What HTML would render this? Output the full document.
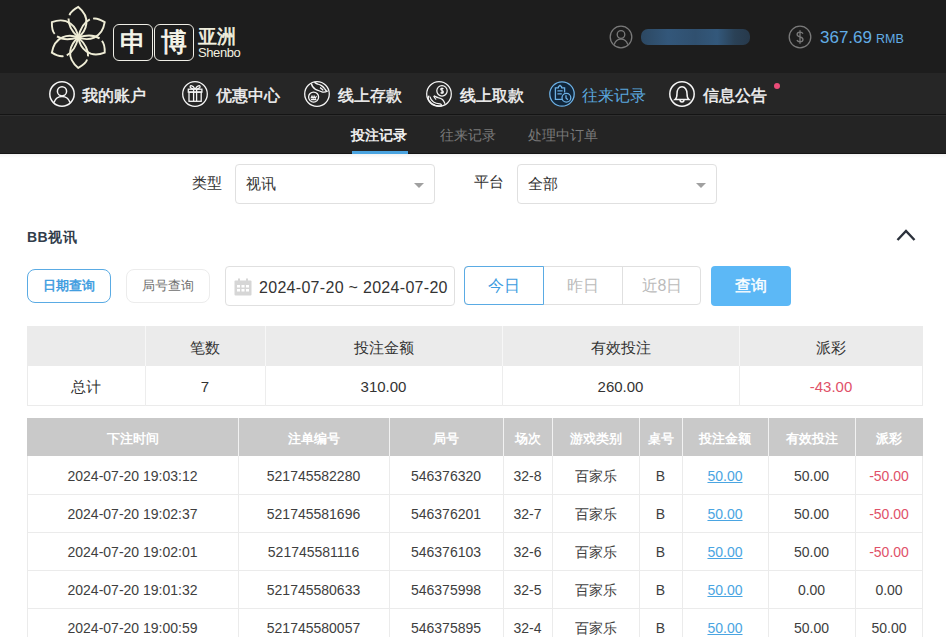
<!DOCTYPE html>
<html><head><meta charset="utf-8">
<style>
*{margin:0;padding:0;box-sizing:border-box}
html,body{width:946px;height:637px;overflow:hidden;background:#fff;font-family:"Liberation Sans",sans-serif;color:#333}
.abs{position:absolute}
#top{position:absolute;left:0;top:0;width:946px;height:73px;background:#1d1d1d}
#nav{position:absolute;left:0;top:73px;width:946px;height:41px;background:#262626}
#navline{position:absolute;left:0;top:114px;width:946px;height:1px;background:#141414}
#navline2{position:absolute;left:0;top:115px;width:946px;height:1px;background:#2e2e2e}
#sub{position:absolute;left:0;top:116px;width:946px;height:38px;background:#242424}
.ni{position:absolute;top:80px;width:26px;height:26px}
.nt{position:absolute;top:85px;font-size:16px;line-height:22px;color:#f2f2f2;font-weight:400;-webkit-text-stroke:0.45px #f2f2f2;white-space:nowrap;letter-spacing:0}
.st{position:absolute;top:125px;font-size:14px;line-height:20px;color:#7a7a7a;white-space:nowrap}
.lbl{position:absolute;font-size:15px;line-height:20px;color:#333}
.sel{position:absolute;top:164px;width:200px;height:40px;border:1px solid #e0e0e0;border-radius:4px}
.sel span{position:absolute;left:10px;top:9px;font-size:15px;line-height:20px;color:#333}
.sel i{position:absolute;right:10px;top:18px;width:0;height:0;border-left:5px solid transparent;border-right:5px solid transparent;border-top:5px solid #a0a0a0}
table{border-collapse:collapse;position:absolute}
.cell{text-align:center;line-height:20px;color:#333;white-space:nowrap}
.hc{text-align:center;font-size:13px;line-height:20px;color:#fff;font-weight:bold;white-space:nowrap}
.dcell{text-align:center;font-size:14px;line-height:20px;color:#3e3e3e;white-space:nowrap}
</style></head><body>
<div id="top"></div>
<div id="nav"></div>
<div id="navline"></div>
<div id="navline2"></div>
<div id="sub"></div>
<div class="abs" style="left:0;top:153px;width:946px;height:1px;background:#161616"></div>
<div class="abs" style="left:0;top:154px;width:946px;height:4px;background:linear-gradient(#f3f3f3,#fff)"></div>


<!-- logo -->
<svg class="abs" style="left:44px;top:4px" width="68" height="66" viewBox="44 4 68 66">
<g transform="translate(78.3,37.4) rotate(-2) scale(1.07)" fill="none" stroke="#efedd6" stroke-width="1.8">
<g id="p">
<path d="M0,0 C8,-6 13,-18 1,-28.5 C-3,-26.5 -6.5,-24 -7.5,-21"/>
<path d="M0,0 C-5,-5 -9,-12 -8.5,-18"/>
</g>
<use href="#p" transform="rotate(60)"/>
<use href="#p" transform="rotate(120)"/>
<use href="#p" transform="rotate(180)"/>
<use href="#p" transform="rotate(240)"/>
<use href="#p" transform="rotate(300)"/>
</g>
</svg>
<div class="abs" style="left:113px;top:24px;width:40px;height:37px;border:1.7px solid #efeee6;border-radius:6px"></div>
<div class="abs" style="left:154px;top:24px;width:40px;height:37px;border:1.7px solid #efeee6;border-radius:6px"></div>
<div class="abs" style="left:113px;top:24px;width:40px;height:37px;text-align:center;font-size:26px;line-height:37px;color:#f6f5ea;-webkit-text-stroke:0.8px #f6f5ea">申</div>
<div class="abs" style="left:154px;top:24px;width:40px;height:37px;text-align:center;font-size:26px;line-height:37px;color:#f6f5ea;-webkit-text-stroke:0.8px #f6f5ea">博</div>
<div class="abs" style="left:198px;top:26px;font-size:19px;line-height:22px;color:#f4f2e0;-webkit-text-stroke:0.6px #f4f2e0">亚洲</div>
<div class="abs" style="left:198px;top:45px;font-size:13px;line-height:16px;color:#f4f2e0;letter-spacing:-0.4px">Shenbo</div>

<!-- account -->
<svg class="abs" style="left:609px;top:25px" width="24" height="24" viewBox="0 0 24 24" fill="none" stroke="#7a7a7a" stroke-width="1.3">
<circle cx="12" cy="12" r="10.8"/><circle cx="12" cy="9.5" r="3.8"/><path d="M5.2 19.6 C6.5 15.5 9 14.2 12 14.2 C15 14.2 17.5 15.5 18.8 19.6"/>
</svg>
<div class="abs" style="left:641px;top:29px;width:109px;height:16px;border-radius:7px;background:linear-gradient(90deg,#2c4862 0%,#33577a 25%,#30506f 50%,#33587b 70%,#2a4156 86%,#27394b 100%)"></div>
<svg class="abs" style="left:788px;top:25px" width="24" height="24" viewBox="0 0 24 24" fill="none" stroke="#7a7a7a" stroke-width="1.3">
<circle cx="12" cy="12" r="10.8"/><path d="M15 8.6 C14.3 7.5 13.2 7.1 12 7.1 C10.3 7.1 9.1 8 9.1 9.4 C9.1 12.4 15 11.3 15 14.4 C15 15.9 13.7 16.8 12 16.8 C10.6 16.8 9.5 16.2 8.9 15.1 M12 5.2 V18.8"/>
</svg>
<div class="abs" style="left:820px;top:28px;font-size:17px;line-height:20px;color:#62ade6;white-space:nowrap">367.69<span style="font-size:12.5px;margin-left:4px">RMB</span></div>

<!-- nav items -->
<svg class="abs" style="left:49px;top:81px" width="26" height="26" viewBox="0 0 26 26" fill="none" stroke="#f5f5f5" stroke-width="1.5">
<circle cx="13" cy="13" r="12.2"/><circle cx="13" cy="10.3" r="4.6"/><path d="M5 21.6 C6.5 17 9.5 15.6 13 15.6 C16.5 15.6 19.5 17 21 21.6"/>
</svg>
<svg class="abs" style="left:182px;top:81px" width="26" height="26" viewBox="0 0 26 26" fill="none" stroke="#f5f5f5" stroke-width="1.3">
<circle cx="13" cy="13" r="12.3"/>
<rect x="6.3" y="8.2" width="13.6" height="2.9"/><rect x="7" y="11.1" width="12.2" height="9.2"/>
<path d="M11.6 8.2 V20.3 M14.6 8.2 V20.3"/>
<path d="M13 8 C12 6.2 10.6 4.8 9.2 4.6 C8 4.5 7.8 5.8 8.6 6.8 C9.4 7.6 10.6 8 11.8 8.1 M13.2 8 C14.2 6.2 15.6 4.8 17 4.6 C18.2 4.5 18.4 5.8 17.6 6.8 C16.8 7.6 15.6 8 14.4 8.1"/>
</svg>
<svg class="abs" style="left:304px;top:81px" width="26" height="26" viewBox="0 0 26 26" fill="none" stroke="#f5f5f5" stroke-width="1.3">
<circle cx="13" cy="13" r="12.3"/>
<circle cx="9.6" cy="16.1" r="5"/>
<path d="M6.9 17.4 L8 15 L9.1 17.4 L10.1 15 L11.2 17.4 L12.5 15 M6.9 18.6 H12.4" stroke-width="1.1"/>
<path d="M7.4 2.4 C7.8 5.2 9 7 11.5 8.3 C13 9.1 14.5 9.6 15.7 10 C17 10.5 17.8 11 18.6 11.1 C20 11.3 21.5 11.2 23.8 10"/>
<path d="M10.4 1.2 C11.8 2.2 12.6 2.8 13.6 3 C15 3.4 16.4 3.9 17.4 4.6 C18.8 5.6 19.8 6.4 20.4 7.3 C21.2 8.4 22 9.5 22.7 10.4"/>
<path d="M16 6.6 C17.2 7.3 18.4 8.2 19.2 9.4"/>
</svg>
<svg class="abs" style="left:426px;top:81px" width="26" height="26" viewBox="0 0 26 26" fill="none" stroke="#f5f5f5" stroke-width="1.25">
<circle cx="13" cy="13" r="12.3"/>
<circle cx="16" cy="9.8" r="5.2"/>
<path d="M17.4 7.9 C17.1 7.4 16.6 7.2 16 7.2 C15.2 7.2 14.7 7.7 14.7 8.3 C14.7 9.8 17.4 9.4 17.4 11 C17.4 11.8 16.8 12.3 16 12.3 C15.3 12.3 14.8 12 14.6 11.5 M16 6.5 V13" stroke-width="1.1"/>
<path d="M3.3 14.8 C2 15.2 1.9 17.6 3 19.6 C4.2 21.8 6.6 23.4 9.5 24.4 C11.5 25 13.5 25 16 24.6"/>
<path d="M3.9 15.6 C4.4 17.6 5.6 19.8 7.5 21 C9 22 11 22.6 14 22.8 C14.8 23 15.3 23.5 15.6 24.2"/>
<path d="M7.8 14.9 C9.2 15.4 10.5 16.2 12 16.6 C13.8 17 15.3 17.4 16.5 18.5 C17.6 19.5 18.4 21 19 22.8"/>
<path d="M7.8 14.9 C8.2 16.2 9 17.8 10.2 18.6"/>
</svg>
<svg class="abs" style="left:549px;top:81px" width="26" height="26" viewBox="0 0 26 26" fill="none" stroke="#6cb0e4" stroke-width="1.3">
<circle cx="13" cy="13" r="12.2" fill="#11263a"/>
<path d="M14.6 18.4 H6.4 V6.8 H9.4 M12.6 6.8 H15.6 V11.6"/>
<path d="M9.4 7.2 V5.8 L11 4.4 L12.6 5.8 V7.2" />
<path d="M8.4 9.8 H13.6 M8.4 12.8 H12.8"/>
<circle cx="17.4" cy="16.8" r="4.4" fill="#11263a"/>
<path d="M17 14.2 V17 L18.8 18.8"/>
</svg>
<svg class="abs" style="left:669px;top:81px" width="26" height="26" viewBox="0 0 26 26" fill="none" stroke="#f5f5f5" stroke-width="1.5">
<circle cx="13" cy="13" r="12.2"/>
<path d="M6.2 18.4 H19.8 C18.2 17.2 18 15.8 18 12.6 C18 8.6 16 5.8 13 5.8 C10 5.8 8 8.6 8 12.6 C8 15.8 7.8 17.2 6.2 18.4 Z"/>
<path d="M11 18.5 C11 20.2 11.9 21 13 21 C14.1 21 15 20.2 15 18.5"/>
</svg>

<div class="nt" style="left:82px">我的账户</div>
<div class="nt" style="left:216px">优惠中心</div>
<div class="nt" style="left:338px">线上存款</div>
<div class="nt" style="left:460px">线上取款</div>
<div class="nt" style="left:582px;color:#5aa6de;-webkit-text-stroke:0">往来记录</div>
<div class="nt" style="left:703px">信息公告</div>
<div class="abs" style="left:774px;top:83px;width:6px;height:6px;border-radius:3px;background:#ea4c78"></div>

<!-- sub nav -->
<div class="st" style="left:351px;color:#fafafa;-webkit-text-stroke:0.45px #fafafa">投注记录</div>
<div class="abs" style="left:352px;top:151px;width:56px;height:3px;background:#4aa3df"></div>
<div class="st" style="left:440px">往来记录</div>
<div class="st" style="left:528px">处理中订单</div>

<!-- filters -->
<div class="lbl" style="left:192px;top:173px">类型</div>
<div class="sel" style="left:235px"><span>视讯</span><i></i></div>
<div class="lbl" style="left:474px;top:172px">平台</div>
<div class="sel" style="left:517px"><span>全部</span><i></i></div>


<!-- section title -->
<div class="abs" style="left:27px;top:227px;font-size:14px;line-height:20px;font-weight:bold;color:#323d4b;letter-spacing:0.5px">BB视讯</div>
<svg class="abs" style="left:894px;top:226px" width="24" height="18" viewBox="0 0 24 18"><path d="M3.5 14 L12 5 L20.5 14" fill="none" stroke="#2b313b" stroke-width="2.4"/></svg>

<!-- query type buttons -->
<div class="abs btn" style="left:27px;top:269px;width:84px;height:34px;border:1px solid #5aabe4;border-radius:8px;color:#3d9ce0;font-size:13px;line-height:32px;text-align:center;-webkit-text-stroke:0.5px #3d9ce0">日期查询</div>
<div class="abs btn" style="left:126px;top:269px;width:84px;height:34px;border:1px solid #ececec;border-radius:8px;color:#707070;font-size:13px;line-height:32px;text-align:center">局号查询</div>

<!-- date box -->
<div class="abs" style="left:225px;top:266px;width:230px;height:40px;border:1px solid #e0e0e0;border-radius:4px"></div>
<svg class="abs" style="left:234px;top:278px" width="18" height="18" viewBox="0 0 18 18">
<rect x="0.5" y="2.5" width="17" height="15" rx="1" fill="#d6d6d6"/>
<rect x="4" y="0.5" width="2" height="4" fill="#d6d6d6"/><rect x="12" y="0.5" width="2" height="4" fill="#d6d6d6"/>
<g fill="#fff"><rect x="3" y="7" width="3" height="2.5"/><rect x="7.5" y="7" width="3" height="2.5"/><rect x="12" y="7" width="3" height="2.5"/><rect x="3" y="11" width="3" height="2.5"/><rect x="7.5" y="11" width="3" height="2.5"/><rect x="12" y="11" width="3" height="2.5"/></g>
</svg>
<div class="abs" style="left:259px;top:278px;font-size:16px;line-height:20px;color:#333;white-space:nowrap;letter-spacing:0.3px">2024-07-20 ~ 2024-07-20</div>

<!-- day group -->
<div class="abs" style="left:464px;top:266px;width:237px;height:39px;border:1px solid #e0e0e0;border-radius:4px"></div>
<div class="abs" style="left:543px;top:267px;width:1px;height:37px;background:#e0e0e0"></div>
<div class="abs" style="left:622px;top:267px;width:1px;height:37px;background:#e0e0e0"></div>
<div class="abs" style="left:464px;top:266px;width:80px;height:39px;border:1px solid #5aabe4;border-radius:4px 0 0 4px"></div>
<div class="abs" style="left:464px;top:276px;width:80px;text-align:center;font-size:16px;line-height:20px;color:#3d9ce0">今日</div>
<div class="abs" style="left:543px;top:276px;width:80px;text-align:center;font-size:16px;line-height:20px;color:#bbb">昨日</div>
<div class="abs" style="left:622px;top:276px;width:80px;text-align:center;font-size:16px;line-height:20px;color:#bbb">近8日</div>
<div class="abs" style="left:711px;top:266px;width:80px;height:40px;background:#5cb8f6;border-radius:4px;color:#fff;font-size:16px;line-height:40px;text-align:center;-webkit-text-stroke:0.4px #fff">查询</div>
<!-- tables -->
<div class="abs" style="left:27px;top:326px;width:896px;height:40px;background:#ebebeb"></div>
<div class="abs" style="left:27px;top:366px;width:896px;height:40px;border:1px solid #ebebeb;border-top:none"></div>
<div class="abs" style="left:145px;top:326px;width:1px;height:40px;background:#f7f7f7"></div>
<div class="abs" style="left:145px;top:366px;width:1px;height:40px;background:#ededed"></div>
<div class="abs" style="left:265px;top:326px;width:1px;height:40px;background:#f7f7f7"></div>
<div class="abs" style="left:265px;top:366px;width:1px;height:40px;background:#ededed"></div>
<div class="abs" style="left:502px;top:326px;width:1px;height:40px;background:#f7f7f7"></div>
<div class="abs" style="left:502px;top:366px;width:1px;height:40px;background:#ededed"></div>
<div class="abs" style="left:739px;top:326px;width:1px;height:40px;background:#f7f7f7"></div>
<div class="abs" style="left:739px;top:366px;width:1px;height:40px;background:#ededed"></div>
<div class="abs cell" style="left:27px;top:338px;width:118px;font-size:15px"></div>
<div class="abs cell" style="left:27px;top:377px;width:118px;font-size:15px;">总计</div>
<div class="abs cell" style="left:145px;top:338px;width:120px;font-size:15px">笔数</div>
<div class="abs cell" style="left:145px;top:377px;width:120px;font-size:15px;">7</div>
<div class="abs cell" style="left:265px;top:338px;width:237px;font-size:15px">投注金额</div>
<div class="abs cell" style="left:265px;top:377px;width:237px;font-size:15px;">310.00</div>
<div class="abs cell" style="left:502px;top:338px;width:237px;font-size:15px">有效投注</div>
<div class="abs cell" style="left:502px;top:377px;width:237px;font-size:15px;">260.00</div>
<div class="abs cell" style="left:739px;top:338px;width:184px;font-size:15px">派彩</div>
<div class="abs cell" style="left:739px;top:377px;width:184px;font-size:15px;color:#df5169;">-43.00</div>
<div class="abs" style="left:27px;top:418px;width:896px;height:38px;background:#c9c9c9"></div>
<div class="abs" style="left:238px;top:418px;width:1px;height:38px;background:#f2f2f2"></div>
<div class="abs" style="left:389px;top:418px;width:1px;height:38px;background:#f2f2f2"></div>
<div class="abs" style="left:503px;top:418px;width:1px;height:38px;background:#f2f2f2"></div>
<div class="abs" style="left:552px;top:418px;width:1px;height:38px;background:#f2f2f2"></div>
<div class="abs" style="left:639px;top:418px;width:1px;height:38px;background:#f2f2f2"></div>
<div class="abs" style="left:682px;top:418px;width:1px;height:38px;background:#f2f2f2"></div>
<div class="abs" style="left:768px;top:418px;width:1px;height:38px;background:#f2f2f2"></div>
<div class="abs" style="left:855px;top:418px;width:1px;height:38px;background:#f2f2f2"></div>
<div class="abs hc" style="left:27px;top:429px;width:211px">下注时间</div>
<div class="abs hc" style="left:238px;top:429px;width:151px">注单编号</div>
<div class="abs hc" style="left:389px;top:429px;width:114px">局号</div>
<div class="abs hc" style="left:503px;top:429px;width:49px">场次</div>
<div class="abs hc" style="left:552px;top:429px;width:87px">游戏类别</div>
<div class="abs hc" style="left:639px;top:429px;width:43px">桌号</div>
<div class="abs hc" style="left:682px;top:429px;width:86px">投注金额</div>
<div class="abs hc" style="left:768px;top:429px;width:87px">有效投注</div>
<div class="abs hc" style="left:855px;top:429px;width:68px">派彩</div>
<div class="abs" style="left:27px;top:456px;width:896px;height:39px;border:1px solid #ebebeb;border-top:none"></div>
<div class="abs" style="left:238px;top:456px;width:1px;height:38px;background:#ebebeb"></div>
<div class="abs" style="left:389px;top:456px;width:1px;height:38px;background:#ebebeb"></div>
<div class="abs" style="left:503px;top:456px;width:1px;height:38px;background:#ebebeb"></div>
<div class="abs" style="left:552px;top:456px;width:1px;height:38px;background:#ebebeb"></div>
<div class="abs" style="left:639px;top:456px;width:1px;height:38px;background:#ebebeb"></div>
<div class="abs" style="left:682px;top:456px;width:1px;height:38px;background:#ebebeb"></div>
<div class="abs" style="left:768px;top:456px;width:1px;height:38px;background:#ebebeb"></div>
<div class="abs" style="left:855px;top:456px;width:1px;height:38px;background:#ebebeb"></div>
<div class="abs dcell" style="left:27px;top:466px;width:211px;">2024-07-20 19:03:12</div>
<div class="abs dcell" style="left:238px;top:466px;width:151px;">521745582280</div>
<div class="abs dcell" style="left:389px;top:466px;width:114px;">546376320</div>
<div class="abs dcell" style="left:503px;top:466px;width:49px;">32-8</div>
<div class="abs dcell" style="left:552px;top:466px;width:87px;">百家乐</div>
<div class="abs dcell" style="left:639px;top:466px;width:43px;">B</div>
<div class="abs dcell" style="left:682px;top:466px;width:86px;color:#4aa5e2;text-decoration:underline">50.00</div>
<div class="abs dcell" style="left:768px;top:466px;width:87px;">50.00</div>
<div class="abs dcell" style="left:855px;top:466px;width:68px;color:#df5169">-50.00</div>
<div class="abs" style="left:27px;top:494px;width:896px;height:39px;border:1px solid #ebebeb;border-top:none"></div>
<div class="abs" style="left:238px;top:494px;width:1px;height:38px;background:#ebebeb"></div>
<div class="abs" style="left:389px;top:494px;width:1px;height:38px;background:#ebebeb"></div>
<div class="abs" style="left:503px;top:494px;width:1px;height:38px;background:#ebebeb"></div>
<div class="abs" style="left:552px;top:494px;width:1px;height:38px;background:#ebebeb"></div>
<div class="abs" style="left:639px;top:494px;width:1px;height:38px;background:#ebebeb"></div>
<div class="abs" style="left:682px;top:494px;width:1px;height:38px;background:#ebebeb"></div>
<div class="abs" style="left:768px;top:494px;width:1px;height:38px;background:#ebebeb"></div>
<div class="abs" style="left:855px;top:494px;width:1px;height:38px;background:#ebebeb"></div>
<div class="abs dcell" style="left:27px;top:504px;width:211px;">2024-07-20 19:02:37</div>
<div class="abs dcell" style="left:238px;top:504px;width:151px;">521745581696</div>
<div class="abs dcell" style="left:389px;top:504px;width:114px;">546376201</div>
<div class="abs dcell" style="left:503px;top:504px;width:49px;">32-7</div>
<div class="abs dcell" style="left:552px;top:504px;width:87px;">百家乐</div>
<div class="abs dcell" style="left:639px;top:504px;width:43px;">B</div>
<div class="abs dcell" style="left:682px;top:504px;width:86px;color:#4aa5e2;text-decoration:underline">50.00</div>
<div class="abs dcell" style="left:768px;top:504px;width:87px;">50.00</div>
<div class="abs dcell" style="left:855px;top:504px;width:68px;color:#df5169">-50.00</div>
<div class="abs" style="left:27px;top:532px;width:896px;height:39px;border:1px solid #ebebeb;border-top:none"></div>
<div class="abs" style="left:238px;top:532px;width:1px;height:38px;background:#ebebeb"></div>
<div class="abs" style="left:389px;top:532px;width:1px;height:38px;background:#ebebeb"></div>
<div class="abs" style="left:503px;top:532px;width:1px;height:38px;background:#ebebeb"></div>
<div class="abs" style="left:552px;top:532px;width:1px;height:38px;background:#ebebeb"></div>
<div class="abs" style="left:639px;top:532px;width:1px;height:38px;background:#ebebeb"></div>
<div class="abs" style="left:682px;top:532px;width:1px;height:38px;background:#ebebeb"></div>
<div class="abs" style="left:768px;top:532px;width:1px;height:38px;background:#ebebeb"></div>
<div class="abs" style="left:855px;top:532px;width:1px;height:38px;background:#ebebeb"></div>
<div class="abs dcell" style="left:27px;top:542px;width:211px;">2024-07-20 19:02:01</div>
<div class="abs dcell" style="left:238px;top:542px;width:151px;">521745581116</div>
<div class="abs dcell" style="left:389px;top:542px;width:114px;">546376103</div>
<div class="abs dcell" style="left:503px;top:542px;width:49px;">32-6</div>
<div class="abs dcell" style="left:552px;top:542px;width:87px;">百家乐</div>
<div class="abs dcell" style="left:639px;top:542px;width:43px;">B</div>
<div class="abs dcell" style="left:682px;top:542px;width:86px;color:#4aa5e2;text-decoration:underline">50.00</div>
<div class="abs dcell" style="left:768px;top:542px;width:87px;">50.00</div>
<div class="abs dcell" style="left:855px;top:542px;width:68px;color:#df5169">-50.00</div>
<div class="abs" style="left:27px;top:570px;width:896px;height:39px;border:1px solid #ebebeb;border-top:none"></div>
<div class="abs" style="left:238px;top:570px;width:1px;height:38px;background:#ebebeb"></div>
<div class="abs" style="left:389px;top:570px;width:1px;height:38px;background:#ebebeb"></div>
<div class="abs" style="left:503px;top:570px;width:1px;height:38px;background:#ebebeb"></div>
<div class="abs" style="left:552px;top:570px;width:1px;height:38px;background:#ebebeb"></div>
<div class="abs" style="left:639px;top:570px;width:1px;height:38px;background:#ebebeb"></div>
<div class="abs" style="left:682px;top:570px;width:1px;height:38px;background:#ebebeb"></div>
<div class="abs" style="left:768px;top:570px;width:1px;height:38px;background:#ebebeb"></div>
<div class="abs" style="left:855px;top:570px;width:1px;height:38px;background:#ebebeb"></div>
<div class="abs dcell" style="left:27px;top:580px;width:211px;">2024-07-20 19:01:32</div>
<div class="abs dcell" style="left:238px;top:580px;width:151px;">521745580633</div>
<div class="abs dcell" style="left:389px;top:580px;width:114px;">546375998</div>
<div class="abs dcell" style="left:503px;top:580px;width:49px;">32-5</div>
<div class="abs dcell" style="left:552px;top:580px;width:87px;">百家乐</div>
<div class="abs dcell" style="left:639px;top:580px;width:43px;">B</div>
<div class="abs dcell" style="left:682px;top:580px;width:86px;color:#4aa5e2;text-decoration:underline">50.00</div>
<div class="abs dcell" style="left:768px;top:580px;width:87px;">0.00</div>
<div class="abs dcell" style="left:855px;top:580px;width:68px;">0.00</div>
<div class="abs" style="left:27px;top:608px;width:896px;height:39px;border:1px solid #ebebeb;border-top:none"></div>
<div class="abs" style="left:238px;top:608px;width:1px;height:38px;background:#ebebeb"></div>
<div class="abs" style="left:389px;top:608px;width:1px;height:38px;background:#ebebeb"></div>
<div class="abs" style="left:503px;top:608px;width:1px;height:38px;background:#ebebeb"></div>
<div class="abs" style="left:552px;top:608px;width:1px;height:38px;background:#ebebeb"></div>
<div class="abs" style="left:639px;top:608px;width:1px;height:38px;background:#ebebeb"></div>
<div class="abs" style="left:682px;top:608px;width:1px;height:38px;background:#ebebeb"></div>
<div class="abs" style="left:768px;top:608px;width:1px;height:38px;background:#ebebeb"></div>
<div class="abs" style="left:855px;top:608px;width:1px;height:38px;background:#ebebeb"></div>
<div class="abs dcell" style="left:27px;top:618px;width:211px;">2024-07-20 19:00:59</div>
<div class="abs dcell" style="left:238px;top:618px;width:151px;">521745580057</div>
<div class="abs dcell" style="left:389px;top:618px;width:114px;">546375895</div>
<div class="abs dcell" style="left:503px;top:618px;width:49px;">32-4</div>
<div class="abs dcell" style="left:552px;top:618px;width:87px;">百家乐</div>
<div class="abs dcell" style="left:639px;top:618px;width:43px;">B</div>
<div class="abs dcell" style="left:682px;top:618px;width:86px;color:#4aa5e2;text-decoration:underline">50.00</div>
<div class="abs dcell" style="left:768px;top:618px;width:87px;">50.00</div>
<div class="abs dcell" style="left:855px;top:618px;width:68px;">50.00</div>
</body></html>
